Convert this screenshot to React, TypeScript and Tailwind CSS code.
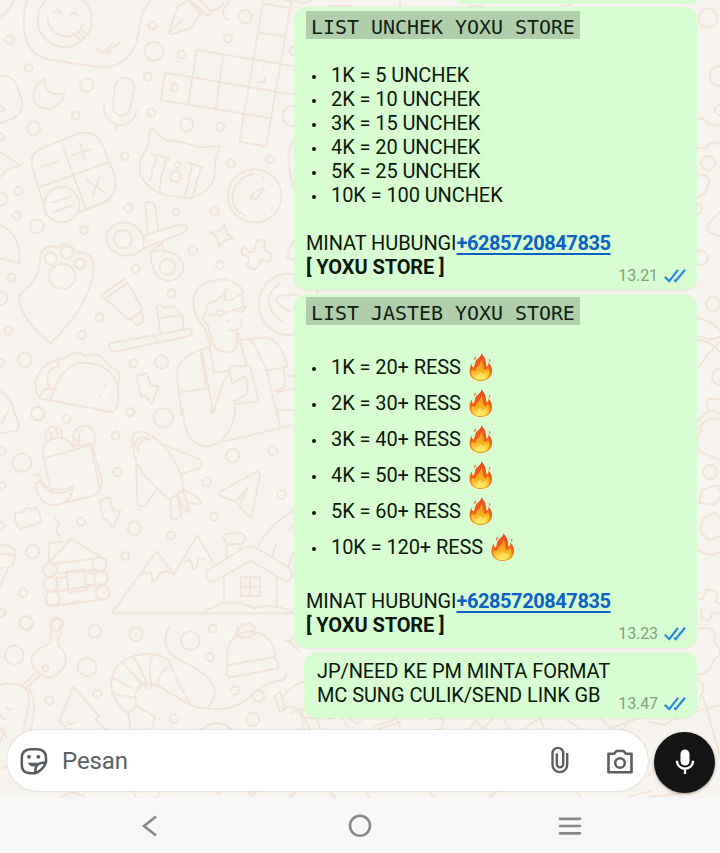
import React from "react";

function Dots({ items }: { items: number[][] }) {
  return (
    <>
      {items.map(([x, y, r], i) => (
        <circle key={i} cx={x} cy={y} r={r} />
      ))}
    </>
  );
}

function Wallpaper() {
  return (
    <svg
      className="absolute inset-0"
      width="720"
      height="798"
      viewBox="0 0 720 798"
      fill="none"
      stroke="#f2e4d8"
      strokeWidth="5.4"
      strokeLinejoin="round"
      strokeLinecap="round"
      aria-hidden="true"
    >
      <g transform="scale(.33333)">
        <path d="M0 52Q30 30 42 0M80 0C60 80 70 160 145 178L300 202C370 205 405 160 415 100L428 35L450 5" />
        <circle cx="194" cy="60" r="81" />
        <path d="M143 52C145 120 240 130 246 72M160 40q6-22 22 0M212 48q10-20 22 0M222 100l20 22M232 92l20 22M242 84l14 16" />
        <path d="M292 145l14 15 32-29M318 162l42-36" />
        <path d="M505 100L532 20L565 0L602 40L575 82L515 103ZM508 98L545 60M570 0L620 45Q632 48 632 32L600 0M632 30Q660 32 672 8M690 0Q650 50 685 60" />
        <path d="M790 0L718 425L798 439L875 0M786 10L870 25M773 97L857 108M590 150L880 198M590 150L565 312M670 165L647 328M495 218L880 284M495 218L482 300L815 355M850 0L870 5" />
        <path d="M512 270l4-14q8-14 18-2l-2 22zM776 244l18 4 2-18M790 208v2" />
        <path d="M0 228Q40 225 52 260L66 300Q70 340 40 355L0 370M0 315l14 14-14 6" />
        <path d="M134 235C95 255 85 315 130 325C165 332 195 300 192 280C160 290 128 275 134 235Z" />
        <path d="M345 262Q352 230 380 234Q408 240 402 270L390 325Q380 350 358 345Q334 338 338 310ZM312 312C305 390 400 395 410 332M350 375l-3 18" />
        <path d="M98 505Q85 460 125 445L235 400Q285 390 305 430L345 530Q355 580 315 605L240 635M98 505L140 645M182 423L258 628M122 560L326 487M123 500l58-17M218 465l58-18M240 428l14 52M260 540l52 36M298 534l-20 54" />
        <circle cx="185" cy="614" r="53" />
        <path d="M152 608l60-18M160 636l60-20" />
        <path d="M452 384C480 402 488 420 505 422C535 418 560 432 600 442L660 438L645 485C655 570 590 600 545 592C470 590 405 550 422 480L442 440ZM455 464L508 474M566 488L612 502M465 468q8 20-8 36q2 20-8 38M500 474q-10 20-10 40q-10 20-10 58M575 492q2 16-8 36q0 30-14 60M602 502q-4 30-14 40q4 20-10 42M525 490q14-8 18 2q-8 16-20 6zM514 520q14-18 26-2q10 24-12 28q-24-4-14-26z" />
        <path d="M0 455L62 497L20 510L0 532M880 425Q850 460 880 560" />
        <circle cx="764" cy="588" r="80" />
        <path d="M760 522C690 535 675 625 735 645M752 596q6-22 38-32q-8 28-32 36zM790 532v2M814 555h2M825 590v2M816 622v2M794 642v2" />
        <Dots items={[[28,119,13],[86,204,12],[260,255,20],[227,346,12],[101,385,20],[458,76,12],[462,154,28],[545,163,12],[443,231,12],[454,338,12],[735,50,20],[684,115,12],[560,375,20],[661,381,12],[375,469,12],[693,490,12],[811,478,12],[0,411,12],[55,573,12],[2,597,20],[385,623,12],[528,636,10],[643,632,12],[880,153,12],[880,348,32]]} />
      </g>
      <g transform="translate(0 200) scale(.33333)">
        <path d="M238 38L330 0M436 25Q432 5 450 6Q465 8 466 25L475 92M436 25L444 100M432 106L548 72Q568 78 556 96L430 146M452 155L486 130L492 158" />
        <path d="M430 145C390 190 320 160 318 115C320 60 410 45 432 115ZM452 155C520 140 560 180 548 215C520 265 450 250 452 155Z" />
        <circle cx="369" cy="117" r="27" /><circle cx="502" cy="200" r="23" />
        <path d="M128 150Q150 130 175 145Q200 112 230 158Q285 150 280 215Q265 320 152 430Q60 360 57 285Q100 255 115 215Q122 185 120 165ZM0 75Q65 100 57 190L0 175" />
        <Dots items={[[152,176,18],[200,158,18],[240,191,16]]} /><ellipse cx="187" cy="229" rx="40" ry="37" />
        <path d="M630 97Q665 100 675 72Q675 105 702 116Q665 118 657 142Q655 105 630 97Z" />
        <path d="M748 157L762 154L768 128Q782 110 796 126L792 148L812 160Q820 176 806 184L782 178L774 202Q758 214 742 198L748 174L728 164Q720 148 732 138Z" />
        <path d="M375 235L302 288L320 300L388 360L428 330L384 248L318 294M396 358l16 18 20-14-8-22" />
        <path d="M330 430L565 386Q585 390 570 408L345 455Q320 450 330 430M462 406l14 25M482 402L470 320Q480 310 490 325Q515 315 532 326Q535 340 550 350L548 388M476 355L538 346" />
        <path d="M632 440L615 385C560 330 565 240 665 238C710 240 730 265 728 280C700 290 700 305 672 300L680 266Q660 305 622 310L618 340Q600 350 625 380L638 430C650 460 705 470 712 430L708 395M725 280L730 315M725 360Q728 385 708 390L688 392M626 346L650 342Q660 352 672 345Q685 330 650 332M672 340L705 328Q725 350 738 318L700 330M680 362l12 2M715 400Q712 420 720 420L800 412Q850 430 862 500L800 512L755 420M632 440Q540 460 530 520L545 645M632 440L605 448L640 638L670 545Q690 520 692 500L750 496L776 605L705 612V645M628 440L642 518L690 512M720 422L740 494M602 460L620 565L540 577M690 512l6 38 40-22q14 40 0 58l-36 18M800 512L832 645M850 502l5 58-32 15M880 565l-50 12M880 630l-50 0M855 528l25 0" />
        <circle cx="868" cy="313" r="92" /><path d="M840 250C790 280 800 340 850 365M870 335C805 300 830 275 865 290Q880 280 900 285M880 125Q865 150 862 175L880 180" />
        <path d="M120 595C90 560 110 490 180 478Q210 470 215 460Q240 455 255 468Q290 455 310 475Q320 495 350 510Q365 530 355 550M120 595L335 636Q355 630 355 590C360 520 300 480 235 490C170 510 165 570 150 600M180 500Q140 500 142 545Q145 565 170 570M170 478L176 500M120 590Q130 560 155 570M315 555v3M300 588v3M330 580v3" />
        <path d="M410 530L440 518L452 556L476 558L455 614L440 590L424 588ZM0 478Q20 475 10 490L0 505M0 570Q40 600 45 645" />
        <Dots items={[[50,47,12],[111,79,21],[252,90,12],[35,233,12],[2,295,20],[26,391,12],[74,479,21],[245,405,12],[298,352,12],[407,206,12],[578,150,13],[660,195,12],[514,280,12],[400,489,12],[485,486,20],[391,636,12],[113,640,20]]} />
      </g>
      <g transform="translate(0 410) scale(.33333)">
        <path d="M550 0C550 150 690 140 706 0M670 95L880 45M830 0L840 50M0 70L50 62Q65 50 40 0M5 40l20-40M290 0l45 6M630 0l6 8 6-8" />
        <path d="M130 145Q120 90 170 84Q200 82 220 110L275 100L305 210Q310 240 280 258L160 286M130 145L272 106L298 230M130 145L155 245M140 84Q130 55 146 55Q160 45 165 55Q188 50 185 80M148 62l8 20M166 56l8 20M222 108Q210 50 255 46Q290 50 284 105M220 85L240 95M230 108L240 90Q230 65 245 60M108 195Q115 190 120 195L122 215Q160 255 220 228Q215 290 150 285Q110 270 108 220L120 215Q150 270 215 238" />
        <path d="M46 310L68 306Q80 285 95 298L108 292Q124 320 122 336L60 358Q40 335 46 310M165 325Q185 340 170 352Q165 370 182 380M298 272L328 262L340 302L362 302L338 354L322 330L310 324Z" />
        <path d="M400 115C390 75 405 60 430 65C510 100 550 190 550 240L510 268C450 220 400 170 400 115ZM404 108Q410 70 450 88Q405 90 415 125M495 105L602 150Q610 165 600 175L545 190M408 140L412 280Q420 295 435 285L468 242M510 265L515 325Q525 335 544 315L532 262M535 258Q550 305 570 308L550 245M555 242Q590 255 604 275Q600 290 568 278" />
        <path d="M660 245L770 185Q785 185 778 205L755 322Q745 325 718 285L742 235L708 275L665 260Q650 254 660 245" />
        <path d="M145 460L148 400L190 394M148 458L212 386L318 450M155 462L290 445M160 490L290 480M165 545L290 525M160 588L310 568M200 485L252 478L260 540L206 548ZM170 505L200 500M170 545V500M255 490L290 488M260 525L290 524M0 405Q40 405 48 425L40 465Q20 475 0 475M0 432L45 435M25 475L0 530" />
        <path d="M335 610L470 424L522 494L592 374L640 460M415 500Q435 480 440 490Q460 480 455 510Q465 525 475 495Q490 480 512 488M555 455Q575 440 578 475Q590 485 595 445L615 450M335 610H880M620 482L730 415Q750 405 775 418L870 475Q885 500 860 515L752 452L645 513Q615 520 620 482M672 500V578M830 500V585M722 502H780V558H722ZM722 530H780M750 502V558M680 440V400Q660 370 685 370H725Q745 380 725 402H685M720 402L722 420M610 608Q680 555 765 595Q820 575 880 608M775 408Q810 340 880 303M828 405l-12 35M880 350l-14 12M880 430l-14 35" />
        <Dots items={[[113,12,20],[200,26,12],[391,8,12],[490,24,29],[347,77,12],[66,158,28],[352,186,13],[698,137,20],[818,122,13],[619,216,13],[845,253,13],[642,320,12],[403,355,20],[243,335,12],[513,376,12],[376,438,12],[98,425,20],[0,348,12],[4,122,12],[4,228,12],[69,548,13],[4,609,12],[80,640,20],[170,642,20],[150,480,21],[152,523,21],[158,566,21],[298,464,21],[303,504,21],[308,548,21]]} />
      </g>
      <g transform="translate(0 600) scale(.33333)">
        <path d="M150 130L155 65Q170 48 188 65L178 85L184 100L175 110V135Q205 165 195 195Q175 235 140 232Q90 210 94 175Q110 145 150 130M120 225L78 265M105 220L70 255M0 255Q90 235 88 310L70 390M85 265Q110 290 98 370L92 390M18 320q10 16 20 5M0 345l12 12M0 382l18 28M15 380L0 430M0 510L20 500M138 10Q140 20 165 16L240 4" />
        <path d="M220 260L178 365L200 385M220 260L298 350L285 358L318 390M200 365q10 16 26 0M384 340C310 290 320 190 400 168Q470 150 510 185Q520 230 575 318L475 258M384 340L410 318Q395 270 430 250L475 258Q470 220 512 195M330 230L400 265M365 185L425 250M400 168L440 245M460 162Q440 200 455 255M332 280L402 292M384 340L392 390M410 318L465 350L455 385M420 250v18M436 248v18M452 250v16" />
        <path d="M508 78C470 150 530 180 570 195C650 240 660 280 625 320M575 318Q700 350 765 275Q800 245 850 240L860 222M556 268l4 4M682 195C675 120 710 92 755 95C800 100 825 130 825 172M685 195L820 172Q838 178 834 205L690 233Q670 220 685 195M712 110L708 98 716 92 712 82 724 80 730 70 740 74 752 66 754 78 766 82 760 92 766 102 754 104 748 114 738 108 726 116 722 106Z" />
        <path d="M825 285L842 278 855 328 838 334ZM850 290Q870 255 915 245M852 325Q890 310 905 350L912 390M905 350L940 355M852 122l18 4 30 28M870 126l8-14M605 388Q650 350 695 388M180 592Q220 565 255 592M400 575q4 20 20 25M480 575q-4 18-20 25M645 575l12 8 10-8M745 575l14 10 12-10" />
        <Dots items={[[79,68,20],[43,165,28],[261,201,28],[284,94,20],[408,103,20],[571,122,28],[638,86,12],[629,172,12],[148,302,12],[292,282,12],[522,355,13],[704,271,13],[776,288,17],[758,358,20],[137,205,9],[2,38,12]]} />
      </g>
      <g transform="translate(290 630) scale(.33333)">
        <path d="M30 235L60 300M0 250L70 232L90 295M115 270L150 255L175 290M180 265q20 24 32 8M250 290l70-24M265 298l70-24M330 290l-8-18M420 270q20-20 40 0q0 30-20 30M540 295l15-25 25 25 30-30M640 268l18 30M700 295l50-30 12 30M830 270l40 25M925 255L960 295 1090 250M1000 298l30-55M1075 275l45 10 60-30 110-30M1225 150Q1255 170 1230 200M1240 200L1290 380M1070 440L1092 420M1080 500L1200 488M600 500l20-15M0 500l18-14M120 487l16 16M230 487l6 16M420 487l16 16M860 487l12 16M1020 500l70-20" />
      </g>
      <g strokeWidth="1.8">
        <path d="M697 120q8-4 12 5 13-3 15 8-3 14-14 10-4 8-13 4M698 176q12-3 11 7-4 14-11 14M720 212q-14 12-13 19l14 6M698 318q22 5 23 18-8 6-23 0M698 340q14 0 25 17M720 342q-10 8-22 26M698 420l12-10 10 4M707 409v-10h14M699 430q4-14 22-10M700 452q-7-14 2-22M700 452l20 8M702 490l15-5 5 10-8 10-15-2ZM703 518l12-5 10 8-2 14-14 5-9-9ZM698 550q12 8 22 2M698 600l6-2 3-9 10 3-1 10 9 3-2 9-10-2-4 9-8-3 1-8M698 629q20-5 16 14 12 9 0 17-4 14-16 14" />
        <Dots items={[[708,18,9.5],[720,76,10],[720,110,5],[708,163,7],[697,209,5],[701,258,7],[713,304,7],[720,377,8],[710,472,7]]} />
        <path d="M294 0q10 6 18 0M330 6h20M400 0v7M470 6h12M560 7l10-2" />
      </g>
    </svg>
  );
}

function Ticks() {
  return (
    <svg width="22" height="16" viewBox="0 0 22 16" fill="none" stroke="#2a88dc" strokeWidth="2.2">
      <path d="M.8 8.8L5.2 13.2L14 1.8M10.2 11.8L11.6 13.2L21 1.8" />
    </svg>
  );
}

function Meta({ time }: { time: string }) {
  return (
    <div className="absolute right-[11px] bottom-1 flex h-5 items-center gap-[6px] text-[16px] tracking-[-0.1px] text-[#83a083]">
      <span>{time}</span>
      <Ticks />
    </div>
  );
}

function Flame() {
  return (
    <svg className="ml-[8px] shrink-0" width="24" height="28" viewBox="0 0 24 28">
      <defs>
        <linearGradient id="flame" x1="0" y1="0" x2="0" y2="1">
          <stop offset="0" stopColor="#ec4722" />
          <stop offset=".55" stopColor="#f4631b" />
          <stop offset="1" stopColor="#f79a1c" />
        </linearGradient>
        <linearGradient id="core" x1="0" y1="0" x2="0" y2="1">
          <stop offset="0" stopColor="#f98a15" />
          <stop offset=".55" stopColor="#fbb022" />
          <stop offset="1" stopColor="#ffe552" />
        </linearGradient>
      </defs>
      <path fill="url(#flame)" d="M12.4.2C14.5 3 17.2 6 17 10.3C16.9 12 17.2 13 18.1 13.4C19.6 12.6 19.7 10.7 19.1 9C23 13 24 17.8 22.5 21.5C20.8 25.7 16.5 28 12 28C6 28 1.5 25 .7 20.2C.1 16.5 1 13 3 10.5C2.8 12.5 3.1 14 4.4 14.6C6.5 12 5.2 9 8.2 6.3C10.2 4.6 12.2 3.1 12.4.2Z" />
      <path fill="url(#core)" d="M12.2 6C14.5 9.5 14 13.6 14.8 16C15.5 18 18 17 18.8 14.5C21.5 18.5 21 23 17.7 25.4C14 27.9 8 27.6 4.8 24.9C2 22.4 1.8 18.7 3.3 16.5C4 18.5 6 18.6 6.8 16.5C8 13.5 12 11.5 12.2 6Z" />
      <path fill="#fff06e" opacity=".6" d="M11 18C12 20 13 21.5 15 21C16 20.8 17 19.5 17 19.5C18 24.5 15 26.7 11.5 26.7C7.6 26.7 5.5 24.5 6 21.5C8 23 10.8 21 11 18Z" />
      <path fill="#ee5a24" d="M6.3 3.6C7.4 5.4 6.2 6.7 5.3 7.5C4.9 6.4 5.4 4.7 6.3 3.6ZM20.5 5.5C21.8 7 21.4 8 20.9 8.9C20 8 19.9 6.8 20.5 5.5Z" />
    </svg>
  );
}

function Item({ text, fire }: { text: string; fire?: boolean }) {
  return (
    <li className={fire ? "flex h-9 items-center" : "flex h-6 items-center"}>
      <span className="mt-[4px] ml-[6px] mr-[15px] size-1 shrink-0 rounded-full bg-[#0b170b]" />
      <span className="whitespace-pre">{text}</span>
      {fire && <Flame />}
    </li>
  );
}

function ListMessage({
  title,
  items,
  time,
  fire,
  pad,
}: {
  title: string;
  items: string[];
  time: string;
  fire?: boolean;
  pad: string;
}) {
  return (
    <article className={`relative w-[403px] shrink-0 rounded-[13px] bg-[#d8fdd2] pb-[11px] pl-3 ${pad} shadow-[0_1px_1px_rgba(0,0,0,0.05)]`}>
      <h2 className="flex h-7 w-[274px] items-center bg-[#b0ceac] pt-[5px] pl-[5px] font-['DejaVu_Sans_Mono',monospace] text-[19.93px] font-normal tracking-normal whitespace-pre text-[#112011]">
        {title}
      </h2>
      <ul className="my-6">
        {items.map((t) => (
          <Item key={t} text={t} fire={fire} />
        ))}
      </ul>
      <p className="h-6 whitespace-nowrap">
        MINAT HUBUNGI
        <a className="font-bold tracking-[-0.43px] text-[#0b62c4] underline decoration-[1.5px] underline-offset-[3px]">+6285720847835</a>
      </p>
      <p className="h-6 font-bold whitespace-nowrap">[ YOXU STORE ]</p>
      <Meta time={time} />
    </article>
  );
}

export default function App() {
  return (
    <div className="relative flex h-[853px] w-[720px] flex-col overflow-hidden bg-[#f7f3ee] font-[Roboto,sans-serif]">
      <Wallpaper />
      <main className="relative flex h-[730px] shrink-0 flex-col items-end gap-1 pr-[23px] text-[20px] leading-6 tracking-[-0.09px] text-[#0b170b]">
        <div className="-mb-px h-1 w-[238px] shrink-0 rounded-b-[12px] bg-[#d8fdd2]" />
        <ListMessage
          title="LIST UNCHEK YOXU STORE"
          items={["1K = 5 UNCHEK", "2K = 10 UNCHEK", "3K = 15 UNCHEK", "4K = 20 UNCHEK", "5K = 25 UNCHEK", "10K = 100 UNCHEK"]}
          time="13.21"
          pad="pt-1"
        />
        <ListMessage
          title="LIST JASTEB YOXU STORE"
          items={["1K = 20+ RESS", "2K = 30+ RESS", "3K = 40+ RESS", "4K = 50+ RESS", "5K = 60+ RESS", "10K = 120+ RESS"]}
          time="13.23"
          pad="pt-[3px]"
          fire
        />
        <article className="relative w-[393px] shrink-0 rounded-[13px] bg-[#d8fdd2] pt-[7px] pb-[11px] pl-[13px] whitespace-nowrap shadow-[0_1px_1px_rgba(0,0,0,0.05)]">
          <p>JP/NEED KE PM MINTA FORMAT</p>
          <p>MC SUNG CULIK/SEND LINK GB</p>
          <Meta time="13.47" />
        </article>
      </main>
      <footer className="relative flex h-[68px] shrink-0 items-start gap-[6px] pl-[7px]">
        <div className="flex h-[61px] w-[641px] items-center rounded-full bg-white pl-[13px] shadow-[0_0_2px_rgba(0,0,0,0.22)]">
          <svg width="28" height="28" viewBox="0 0 28 28" fill="none" stroke="#575c60" strokeWidth="2.5" strokeLinejoin="round">
            <path d="M15 26.2H11C4.5 26.2 1.8 23.5 1.8 17.5V11C1.8 4.8 4.8 2.2 11 2.2H17C23.2 2.2 26 4.8 26 11V15.5C23.5 21.5 20.5 24.5 15 26.2ZM15.2 26C15.2 18.5 17.5 15.6 25.8 15.5" />
            <path d="M8.3 16.2H17L15.2 18.9C12 19.6 9.6 18.2 8.3 16.2Z" fill="#575c60" strokeWidth="1" />
            <circle cx="9" cy="9.8" r="1.9" fill="#575c60" stroke="none" />
            <circle cx="18.3" cy="9.8" r="1.9" fill="#575c60" stroke="none" />
          </svg>
          <span className="ml-[14px] flex-1 text-[24px] leading-7 tracking-[-0.1px] text-[#5b6064]">Pesan</span>
          <svg className="mr-[37px] mb-[2px]" width="18" height="28" viewBox="0 0 18 28" fill="none" stroke="#5b6064" strokeWidth="2.4">
            <path d="M16.2 7V18.8A7.35 7.35 0 0 1 1.5 18.8V7.2A5.35 5.35 0 0 1 12.2 7.2V18.2A3.2 3.2 0 0 1 5.8 18.2V7.5" />
          </svg>
          <svg className="mt-[3px] mr-[14px]" width="28" height="26" viewBox="0 0 28 26" fill="none" stroke="#5b6064" strokeWidth="2.6" strokeLinejoin="round">
            <path d="M2.5 4.8H8L10.5 2H17.5L20 4.8H25.5V23.2H2.5Z" />
            <circle cx="14" cy="14" r="4.8" />
          </svg>
        </div>
        <div className="mt-[2px] flex size-[61px] items-center justify-center rounded-full bg-[#141414] shadow-[0_1px_3px_rgba(0,0,0,0.35)]">
          <svg className="mb-[2px]" width="20" height="26" viewBox="0 0 20 26" fill="none" stroke="#fff" strokeWidth="2.4">
            <rect x="5.5" y=".5" width="9" height="16" rx="4.5" fill="#fff" stroke="none" />
            <path d="M2 11.8C2 22.3 18 22.3 18 11.8M10 19.5V25" />
          </svg>
        </div>
      </footer>
      <nav className="relative flex h-[55px] items-center justify-center bg-[#f6f7f9] pr-px">
        <div className="flex w-[444px] items-center justify-between">
          <svg width="24" height="24" viewBox="0 0 24 24" fill="none" stroke="#87888a" strokeWidth="2.6">
            <path d="M18 2.5L6 12L18 21.5" />
          </svg>
          <svg width="24" height="24" viewBox="0 0 24 24" fill="none" stroke="#87888a" strokeWidth="2.6">
            <circle cx="12" cy="11.8" r="10" />
          </svg>
          <svg width="24" height="24" viewBox="0 0 24 24" stroke="#87888a" strokeWidth="2.7" strokeLinecap="round">
            <path d="M2 4.8H22M2 12H22M2 19.3H22" />
          </svg>
        </div>
      </nav>
    </div>
  );
}
